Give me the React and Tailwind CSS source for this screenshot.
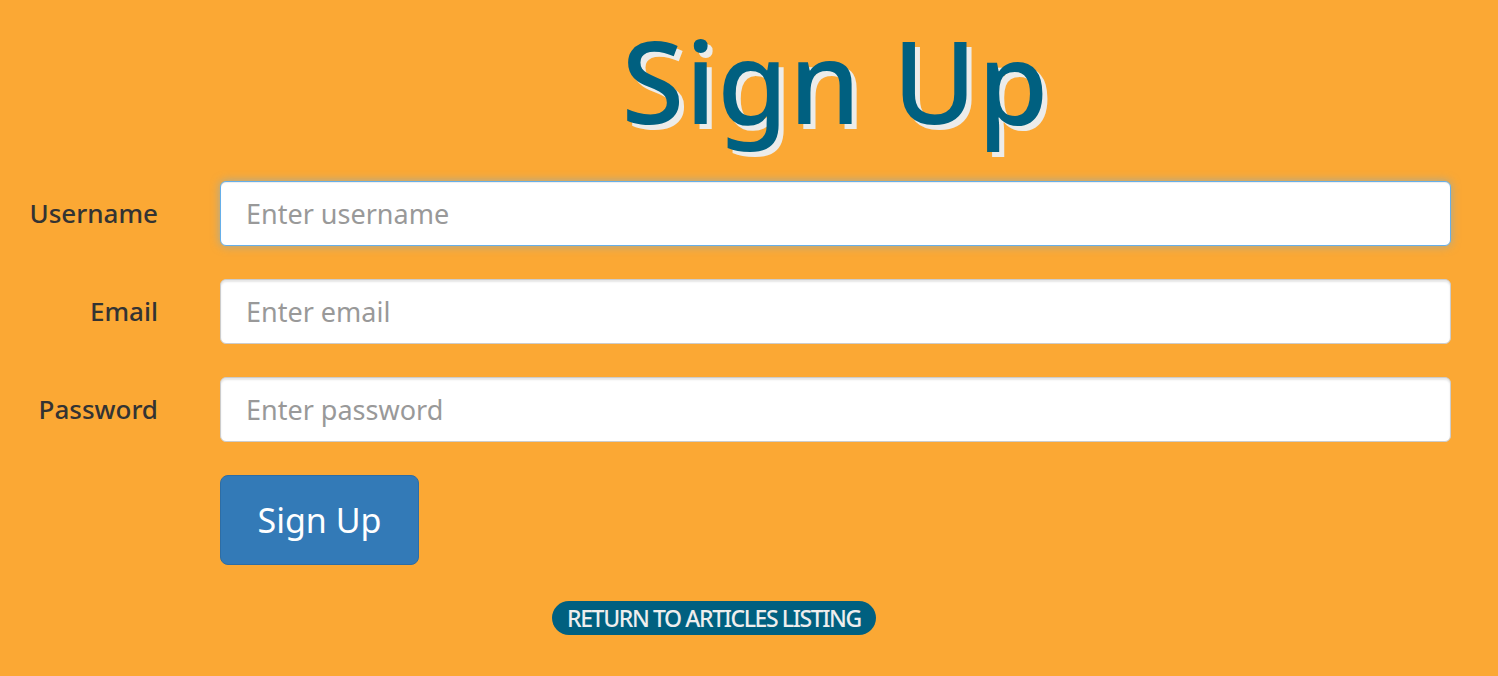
import React from 'react';

const fields = [
    { label: 'Username', type: 'text', placeholder: 'Enter username', focused: true },
    { label: 'Email', type: 'email', placeholder: 'Enter email' },
    { label: 'Password', type: 'password', placeholder: 'Enter password' },
];

const App = () => {
    return (
        <div className="min-h-[676px] w-full bg-[#fba834] font-['Noto_Sans',sans-serif] pr-[47px]">
            <div className="pl-[220px] pt-[6px] text-center">
                <h1 className="text-[114px] leading-[148px] font-medium tracking-[0.01em] text-[#006080] [text-shadow:5px_5px_0_#ececea]">
                    Sign Up
                </h1>
            </div>

            <form className="mt-[27px] flex flex-col gap-[33px]" onSubmit={(e) => e.preventDefault()}>
                {fields.map((f) => (
                    <div key={f.label} className="flex items-center">
                        <label className="w-[158px] shrink-0 text-right text-[26px] font-medium text-[#333]">
                            {f.label}
                        </label>
                        <input
                            type={f.type}
                            placeholder={f.placeholder}
                            className={`ml-[62px] h-[65px] flex-1 rounded-[6px] bg-white px-[25px] text-[27px] text-[#555] placeholder:text-[#999] outline-none border ${
                                f.focused
                                    ? 'border-[#66afe9] shadow-[inset_0_1px_1px_rgba(0,0,0,0.075),0_0_10px_rgba(102,175,233,0.6)]'
                                    : 'border-[#ccc] shadow-[inset_0_2px_2px_rgba(0,0,0,0.1)]'
                            }`}
                        />
                    </div>
                ))}

                <div className="pl-[220px]">
                    <button
                        type="submit"
                        className="h-[90px] w-[199px] rounded-[8px] border border-[#2e6da4] bg-[#337ab7] text-[34px] text-white"
                    >
                        Sign Up
                    </button>
                </div>
            </form>

            <div className="mt-[36px] pl-[552px]">
                <a
                    href="#"
                    className="inline-block rounded-full bg-[#006080] px-[15px] text-[23px] font-medium leading-[34px] tracking-[-0.06em] text-[#eee]"
                >
                    RETURN TO ARTICLES LISTING
                </a>
            </div>
        </div>
    );
};

export default App;
